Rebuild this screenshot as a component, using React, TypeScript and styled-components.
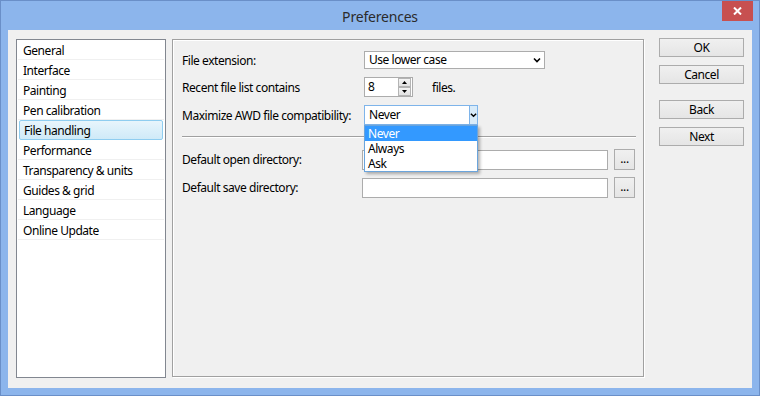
import React from "react";
import styled, { createGlobalStyle, css } from "styled-components";

const Global = createGlobalStyle`
  html, body { margin: 0; padding: 0; background: #fff; }
  body { font-family: "Noto Sans", "Open Sans", sans-serif; font-size: 12px; color: #000; }
  * { box-sizing: border-box; }
`;

const FONT = css`
  font-family: "Noto Sans", "Open Sans", sans-serif;
  font-size: 12px;
  letter-spacing: -0.45px;
`;

const Window = styled.div`
  width: 760px;
  height: 396px;
  background: #8cb5ec;
  border: 1px solid #6a8fc8;
  display: flex;
  flex-direction: column;
`;

const TitleBar = styled.div`
  height: 29px;
  display: grid;
  grid-template-columns: 1fr auto 1fr;
  align-items: center;
`;

const Title = styled.div`
  grid-column: 2;
  font-family: "Noto Sans", "Open Sans", sans-serif;
  font-size: 14px;
  letter-spacing: -0.2px;
  color: #2b2b2b;
  padding-top: 1px;
`;

const CloseButton = styled.div`
  grid-column: 3;
  justify-self: end;
  align-self: start;
  margin-right: 6px;
  width: 31px;
  height: 20px;
  background: #c75050;
  display: flex;
  align-items: center;
  justify-content: center;
`;

const Client = styled.div`
  flex: 1;
  margin: 0 7px 7px 7px;
  background: #f0f0f0;
  display: flex;
  padding: 8px 0 0 8px;
  ${FONT};
`;

const ListBox = styled.div`
  margin-top: 1px;
  width: 150px;
  height: 339px;
  background: #fff;
  border: 1px solid #828790;
  padding: 0 1px;
`;

const ListItem = styled.div<{ $selected?: boolean }>`
  height: 20px;
  border-bottom: 1px solid #f0f0f0;
  padding: 1px 0 0 5px;
  display: flex;
  align-items: center;
  white-space: nowrap;
  ${(p) =>
    p.$selected &&
    css`
      margin: 0 1px;
      padding-left: 4px;
      border: 1px solid #8fcdf0;
      border-radius: 2px;
      background: linear-gradient(#e8f5fc, #cfeaf8);
    `}
`;

const Panel = styled.div`
  position: relative;
  margin: 1px 0 0 6px;
  width: 472px;
  height: 338px;
  border: 1px solid #a0a0a0;
  box-shadow: 1px 1px 0 #fff, inset 1px 1px 0 #fff;
  padding: 11px 7px 0 9px;
  display: flex;
  flex-direction: column;
`;

const Row = styled.div<{ $gap?: number }>`
  display: flex;
  align-items: center;
  margin-top: ${(p) => p.$gap ?? 0}px;
`;

const Label = styled.div<{ $w: number }>`
  width: ${(p) => p.$w}px;
  white-space: nowrap;
`;

const SelectBox = styled.div<{ $w: number; $h: number; $hot?: boolean }>`
  position: relative;
  width: ${(p) => p.$w}px;
  height: ${(p) => p.$h}px;
  background: #fff;
  border: 1px solid ${(p) => (p.$hot ? "#7eb4ea" : "#acacac")};
  display: flex;
  align-items: center;
  padding-left: 4px;
`;

const SelectText = styled.div`
  flex: 1;
  line-height: 14px;
`;

const ArrowZone = styled.div<{ $hot?: boolean }>`
  width: ${(p) => (p.$hot ? 8 : 14)}px;
  align-self: stretch;
  display: flex;
  align-items: center;
  justify-content: center;
  overflow: visible;
  ${(p) =>
    p.$hot &&
    css`
      background: #d8ebf9;
      border-left: 1px solid #7eb4ea;
    `}
`;

const SpinBox = styled.div`
  width: 49px;
  height: 20px;
  background: #fff;
  border: 1px solid #acacac;
  display: flex;
  align-items: center;
  padding-left: 3px;
`;

const SpinButtons = styled.div`
  width: 13px;
  height: 18px;
  display: flex;
  flex-direction: column;
  margin-right: 1px;
`;

const SpinBtn = styled.div`
  flex: 1;
  border: 1px solid #b4b4b4;
  background: linear-gradient(#f4f4f4, #e2e2e2);
  display: flex;
  align-items: center;
  justify-content: center;
`;

const Suffix = styled.div`
  margin-left: 19px;
`;

const Separator = styled.div`
  margin-top: 11px;
  height: 2px;
  border-top: 1px solid #a0a0a0;
  border-bottom: 1px solid #fff;
`;

const TextInput = styled.div`
  width: 246px;
  height: 20px;
  background: #fff;
  border: 1px solid #acacac;
`;

const SmallButton = styled.div`
  margin-left: 6px;
  width: 21px;
  height: 21px;
  border: 1px solid #acacac;
  background: linear-gradient(#f0f0f0, #e5e5e5);
  display: flex;
  align-items: center;
  justify-content: center;
  padding-bottom: 3px;
`;

const Dropdown = styled.div`
  position: absolute;
  left: 191px;
  top: 85px;
  width: 114px;
  background: #fff;
  border: 1px solid #6aa4dc;
  box-shadow: 2px 2px 3px rgba(0, 0, 0, 0.3);
  z-index: 2;
`;

const DropItem = styled.div<{ $active?: boolean }>`
  height: 15px;
  line-height: 15px;
  padding-left: 3px;
  background: ${(p) => (p.$active ? "#3399ff" : "#fff")};
  color: ${(p) => (p.$active ? "#fff" : "#000")};
`;

const ButtonColumn = styled.div`
  margin-left: 15px;
  width: 85px;
  display: flex;
  flex-direction: column;
`;

const DialogButton = styled.div<{ $gap: number }>`
  margin-top: ${(p) => p.$gap}px;
  height: 19px;
  border: 1px solid #acacac;
  background: linear-gradient(#f0f0f0, #e5e5e5);
  display: flex;
  align-items: center;
  justify-content: center;
`;

const Chevron = () => (
  <svg width="8" height="6" viewBox="0 0 8 6">
    <path d="M1 1.5 L4 4.5 L7 1.5" fill="none" stroke="#000" strokeWidth="1.6" />
  </svg>
);

const Tri = ({ up }: { up?: boolean }) => (
  <svg width="5" height="3" viewBox="0 0 5 3">
    <path d={up ? "M0 3 L2.5 0 L5 3 Z" : "M0 0 L2.5 3 L5 0 Z"} fill="#000" />
  </svg>
);

const items = [
  "General",
  "Interface",
  "Painting",
  "Pen calibration",
  "File handling",
  "Performance",
  "Transparency & units",
  "Guides & grid",
  "Language",
  "Online Update",
];

export default function App() {
  return (
    <>
      <Global />
      <Window>
        <TitleBar>
          <Title>Preferences</Title>
          <CloseButton>
            <svg width="9" height="8" viewBox="0 0 9 8">
              <path d="M1 0.5 L8 7.5 M8 0.5 L1 7.5" stroke="#fff" strokeWidth="2" />
            </svg>
          </CloseButton>
        </TitleBar>
        <Client>
          <ListBox>
            {items.map((it) => (
              <ListItem key={it} $selected={it === "File handling"}>
                {it}
              </ListItem>
            ))}
          </ListBox>
          <Panel>
            <Row>
              <Label $w={182}>File extension:</Label>
              <SelectBox $w={181} $h={18}>
                <SelectText>Use lower case</SelectText>
                <ArrowZone>
                  <Chevron />
                </ArrowZone>
              </SelectBox>
            </Row>
            <Row $gap={8}>
              <Label $w={182}>Recent file list contains</Label>
              <SpinBox>
                <SelectText>8</SelectText>
                <SpinButtons>
                  <SpinBtn>
                    <Tri up />
                  </SpinBtn>
                  <SpinBtn>
                    <Tri />
                  </SpinBtn>
                </SpinButtons>
              </SpinBox>
              <Suffix>files.</Suffix>
            </Row>
            <Row $gap={8}>
              <Label $w={182}>Maximize AWD file compatibility:</Label>
              <SelectBox $w={114} $h={20} $hot>
                <SelectText>Never</SelectText>
                <ArrowZone $hot>
                  <Chevron />
                </ArrowZone>
              </SelectBox>
            </Row>
            <Separator />
            <Row $gap={11}>
              <Label $w={180}>Default open directory:</Label>
              <TextInput />
              <SmallButton>...</SmallButton>
            </Row>
            <Row $gap={7}>
              <Label $w={180}>Default save directory:</Label>
              <TextInput />
              <SmallButton>...</SmallButton>
            </Row>
            <Dropdown>
              <DropItem $active>Never</DropItem>
              <DropItem>Always</DropItem>
              <DropItem>Ask</DropItem>
            </Dropdown>
          </Panel>
          <ButtonColumn>
            <DialogButton $gap={0}>OK</DialogButton>
            <DialogButton $gap={8}>Cancel</DialogButton>
            <DialogButton $gap={16}>Back</DialogButton>
            <DialogButton $gap={8}>Next</DialogButton>
          </ButtonColumn>
        </Client>
      </Window>
    </>
  );
}
